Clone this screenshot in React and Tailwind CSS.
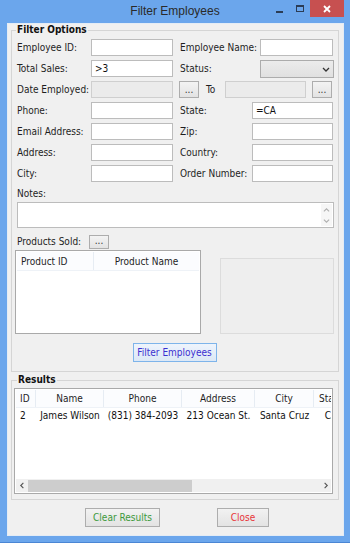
import React from 'react'

const FONT = { fontFamily: 'Tahoma, "DejaVu Sans Condensed", "Liberation Sans", sans-serif' }

function Label({ w, children }) {
  return <div className={`${w} shrink-0 text-[#1e1e1e] leading-[12px]`}>{children}</div>
}

function Input({ w, value, disabled }) {
  return (
    <div
      className={`${w} h-[17px] shrink-0 border flex items-center px-[3px] text-[#111] ${
        disabled ? 'bg-[#ebebeb] border-[#cfcfcf]' : 'bg-white border-[#bcbcbc]'
      }`}
    >
      {value}
    </div>
  )
}

function DotsBtn({ className = '' }) {
  return (
    <div
      className={`w-[20px] shrink-0 border border-[#adadad] bg-gradient-to-b from-[#f3f3f3] to-[#e3e3e3] flex items-end justify-center text-[#333] leading-[8px] pb-[3px] ${className}`}
    >
      ...
    </div>
  )
}

function Chevron({ dir = 'down', color = '#555', size = 8 }) {
  const d = {
    down: 'M1 3 L4 6 L7 3',
    up: 'M1 5 L4 2 L7 5',
    left: 'M5 1 L2 4 L5 7',
    right: 'M3 1 L6 4 L3 7',
  }[dir]
  return (
    <svg width={size} height={size} viewBox="0 0 8 8">
      <path d={d} fill="none" stroke={color} strokeWidth="1.3" />
    </svg>
  )
}

export default function App() {
  return (
    <div className="w-[350px] h-[543px] bg-[#6ba6ec] flex flex-col border-b border-[#4a86d4] text-[10px]" style={FONT}>
      {/* Title bar */}
      <div className="h-[23px] shrink-0 grid grid-cols-[1fr_auto_1fr]">
        <div />
        <div className="text-[12px] leading-[23px] text-[#2a2a2a]" style={{ fontFamily: '"Liberation Sans", sans-serif' }}>
          Filter Employees
        </div>
        <div className="flex justify-end items-start pr-[6px]">
          <div className="w-[7px] h-[2px] bg-[#2b3c55] mt-[11px]" />
          <div className="w-[8px] h-[7px] border border-t-2 border-[#2b3c55] ml-[13px] mt-[5px]" />
          <div className="w-[34px] h-[17px] bg-[#c75050] ml-[6px] flex items-center justify-center">
            <svg width="8" height="8" viewBox="0 0 8 8">
              <path d="M1 1 L7 7 M7 1 L1 7" stroke="white" strokeWidth="1.8" />
            </svg>
          </div>
        </div>
      </div>

      {/* Client area */}
      <div className="ml-[7px] mr-[6px] h-[513px] shrink-0 bg-[#f0f0f0] border border-[#e4ecf5] flex flex-col">
        {/* Filter Options */}
        <fieldset className="ml-[3px] w-[328px] border border-[#d5d5d5] pl-[5px] pt-[3px] pb-[9px]">
          <legend className="px-[1px] -ml-[1px] font-bold text-[#111] leading-[12px]">Filter Options</legend>

          <div className="flex items-center h-[17px]">
            <Label w="w-[74px]">Employee ID:</Label>
            <Input w="w-[82px]" />
            <div className="w-[7px]" />
            <Label w="w-[80px]">Employee Name:</Label>
            <Input w="w-[73px]" />
          </div>

          <div className="flex items-center h-[17px] mt-[4px]">
            <Label w="w-[74px]">Total Sales:</Label>
            <Input w="w-[82px]" value=">3" />
            <div className="w-[7px]" />
            <Label w="w-[80px]">Status:</Label>
            <div className="w-[74px] h-[18px] border border-[#acacac] bg-gradient-to-b from-[#ececec] to-[#e0e0e0] flex items-center justify-end pr-[3px]">
              <Chevron dir="down" color="#333" />
            </div>
          </div>

          <div className="flex items-center h-[17px] mt-[4px]">
            <Label w="w-[74px]">Date Employed:</Label>
            <Input w="w-[82px]" disabled />
            <DotsBtn className="ml-[6px] h-[17px]" />
            <div className="w-[26px] pl-[7px] text-[#1e1e1e]">To</div>
            <Input w="w-[81px]" disabled />
            <DotsBtn className="ml-[6px] h-[17px]" />
          </div>

          {[
            ['Phone:', 'State:', '=CA'],
            ['Email Address:', 'Zip:', ''],
            ['Address:', 'Country:', ''],
            ['City:', 'Order Number:', ''],
          ].map(([a, b, v]) => (
            <div key={a} className="flex items-center h-[17px] mt-[4px]">
              <Label w="w-[74px]">{a}</Label>
              <Input w="w-[82px]" />
              <div className="w-[7px]" />
              <Label w="w-[72px]">{b}</Label>
              <Input w="w-[81px]" value={v} />
            </div>
          ))}

          <div className="mt-[6px] leading-[12px] text-[#1e1e1e]">Notes:</div>
          <div className="mt-[2px] w-[317px] h-[26px] bg-white border border-[#bcbcbc] flex justify-end">
            <div className="w-[11px] bg-[#f6f6f6] flex flex-col items-center justify-center gap-[3px] mr-[1px] my-[1px]">
              <Chevron dir="up" color="#b0b0b0" size={7} />
              <Chevron dir="down" color="#b0b0b0" size={7} />
            </div>
          </div>

          <div className="mt-[7px] flex items-center h-[14px]">
            <Label w="w-[72px]">Products Sold:</Label>
            <DotsBtn className="h-[14px] pb-[2px]" />
          </div>

          <div className="mt-[1px] -ml-[2px] flex items-end">
            <div className="w-[186px] h-[84px] border border-[#a9a9a9] bg-white p-[1px]">
              <div className="flex h-[19px] bg-[#fbfcfe] border-b border-[#eef2f7]">
                <div className="w-[77px] border-r border-[#e6ecf3] flex items-center pl-[4px] text-[#1e1e1e]">Product ID</div>
                <div className="flex-1 flex items-center justify-center text-[#1e1e1e]">Product Name</div>
              </div>
            </div>
            <div className="ml-[19px] w-[114px] h-[76px] border border-[#dcdcdc] bg-[#eeeeee]" />
          </div>

          <div className="mt-[9px] flex justify-center pr-[6px]">
            <div className="w-[84px] h-[19px] border border-[#7eb4ea] bg-gradient-to-b from-[#eef4fc] to-[#dce8f6] flex items-center justify-center text-[#3a2fd0]">
              Filter Employees
            </div>
          </div>
        </fieldset>

        {/* Results */}
        <fieldset className="mt-[2px] ml-[3px] w-[328px] border border-[#d5d5d5] px-[2px] pt-[2px] pb-[5px]">
          <legend className="ml-[3px] px-[1px] font-bold text-[#111] leading-[12px]">Results</legend>
          <div className="w-[319px] h-[106px] border border-[#a9a9a9] bg-white p-[1px] flex flex-col">
            <div className="flex-1 overflow-hidden">
              <div className="flex h-[18px] bg-[#fbfcfe] border-b border-[#eef2f7] w-max text-[#1e1e1e]">
                <div className="w-[20px] pl-[4px] flex items-center border-r border-[#e6ecf3]">ID</div>
                <div className="w-[68px] flex items-center justify-center border-r border-[#e6ecf3]">Name</div>
                <div className="w-[78px] flex items-center justify-center border-r border-[#e6ecf3]">Phone</div>
                <div className="w-[73px] flex items-center justify-center border-r border-[#e6ecf3]">Address</div>
                <div className="w-[59px] flex items-center justify-center border-r border-[#e6ecf3]">City</div>
                <div className="w-[34px] flex items-center justify-center">State</div>
              </div>
              <div className="flex h-[14px] w-max text-[#111]">
                <div className="w-[20px] pl-[4px] flex items-center">2</div>
                <div className="w-[68px] flex items-center justify-center">James Wilson</div>
                <div className="w-[78px] flex items-center justify-center">(831) 384-2093</div>
                <div className="w-[73px] flex items-center justify-center">213 Ocean St.</div>
                <div className="w-[59px] flex items-center justify-center">Santa Cruz</div>
                <div className="w-[34px] flex items-center justify-center">CA</div>
              </div>
            </div>
            <div className="h-[13px] bg-[#f0f0f0] flex items-center">
              <div className="w-[12px] flex justify-center">
                <Chevron dir="left" color="#555" size={7} />
              </div>
              <div className="w-[164px] h-[12px] bg-[#cdcdcd]" />
              <div className="flex-1" />
              <div className="w-[12px] flex justify-center">
                <Chevron dir="right" color="#555" size={7} />
              </div>
            </div>
          </div>
        </fieldset>

        {/* Buttons */}
        <div className="mt-[8px] flex">
          <div className="ml-[77px] w-[75px] h-[19px] border border-[#adadad] bg-gradient-to-b from-[#f2f2f2] to-[#e3e3e3] flex items-center justify-center text-[#3c9a3c]">
            Clear Results
          </div>
          <div className="ml-[57px] w-[52px] h-[19px] border border-[#adadad] bg-gradient-to-b from-[#f2f2f2] to-[#e3e3e3] flex items-center justify-center text-[#e8353a]">
            Close
          </div>
        </div>
      </div>
    </div>
  )
}
